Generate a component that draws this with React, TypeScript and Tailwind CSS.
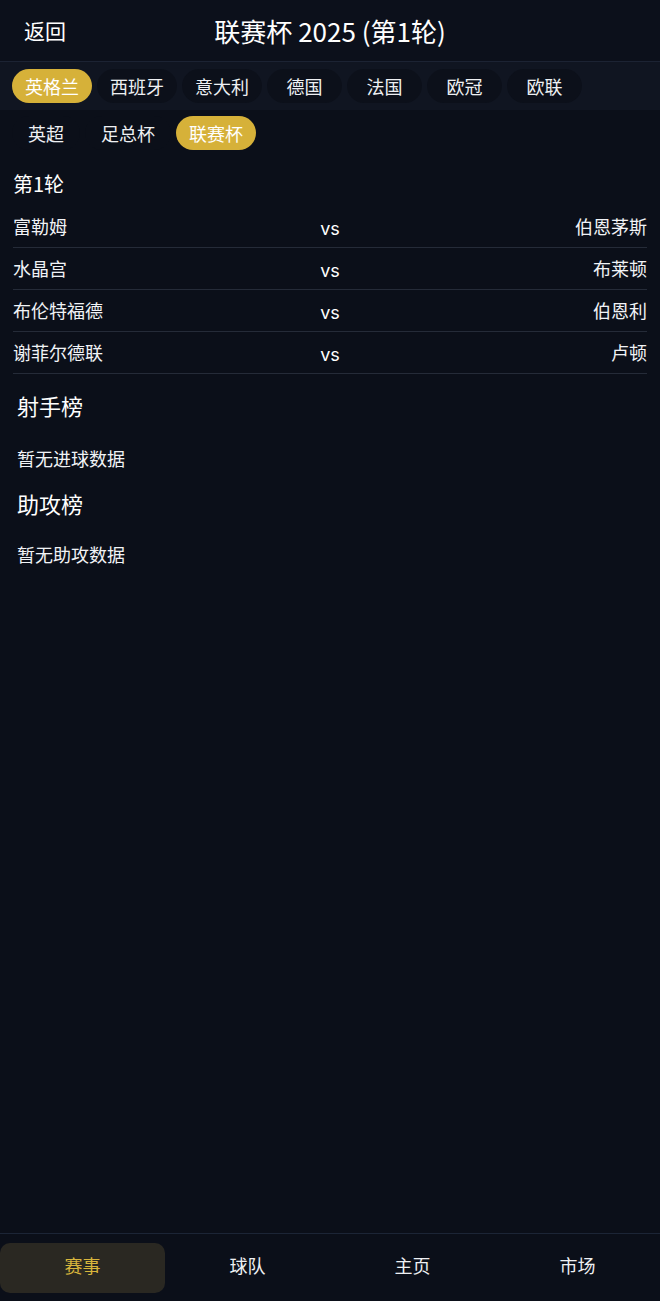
import { useState } from 'react'

const countries = ['英格兰', '西班牙', '意大利', '德国', '法国', '欧冠', '欧联']
const leagues = ['英超', '足总杯', '联赛杯']

const matches = [
  { home: '富勒姆', away: '伯恩茅斯' },
  { home: '水晶宫', away: '布莱顿' },
  { home: '布伦特福德', away: '伯恩利' },
  { home: '谢菲尔德联', away: '卢顿' },
]

const navItems = ['赛事', '球队', '主页', '市场']

export default function App() {
  const [country, setCountry] = useState('英格兰')
  const [league, setLeague] = useState('联赛杯')
  const [tab, setTab] = useState('赛事')

  return (
    <div
      className="min-h-[1301px] flex flex-col bg-[#0b0f19] text-[#f1f3f6]"
      style={{ fontFamily: '"Noto Sans CJK SC", "Noto Sans", sans-serif' }}
    >
      {/* Header */}
      <header className="h-[62px] flex items-center relative bg-[#0c101b] border-b border-[#1c2333]">
        <button className="pl-6 text-[21px] leading-none text-white">返回</button>
        <h1 className="absolute left-1/2 -translate-x-1/2 text-[26px] leading-none text-white whitespace-nowrap">
          联赛杯 2025 (第1轮)
        </h1>
      </header>

      {/* Country tabs */}
      <div className="h-[48px] flex items-center gap-[5px] px-3 bg-[#101521]">
        {countries.map((c) => (
          <button
            key={c}
            onClick={() => setCountry(c)}
            className={`h-[34px] px-3 rounded-full text-[18px] leading-none ${
              c === country ? 'bg-[#d6b139] text-white' : 'bg-[#0c101a] text-[#eef0f3]'
            } ${c.length === 2 ? 'min-w-[75px]' : 'min-w-[80px]'}`}
          >
            {c}
          </button>
        ))}
      </div>

      {/* League tabs */}
      <div className="h-[46px] flex items-center gap-[5px] px-3">
        {leagues.map((l) => (
          <button
            key={l}
            onClick={() => setLeague(l)}
            className={`h-[34px] rounded-full text-[18px] leading-none ${
              l === league ? 'px-[13px] bg-[#d6b139] text-white' : 'px-4 bg-[#0b0f19] text-[#eef0f3]'
            }`}
          >
            {l}
          </button>
        ))}
      </div>

      {/* Round */}
      <section className="px-[13px] pt-[14px]">
        <h2 className="text-[20px] leading-[28px] text-white">第1轮</h2>
        <div className="mt-[8px]">
          {matches.map((m) => (
            <div
              key={m.home}
              className="h-[42px] grid grid-cols-[1fr_auto_1fr] items-center border-b border-[#252b38] text-[18px]"
            >
              <span>{m.home}</span>
              <span
                className="pt-[3px] text-[18px] text-center text-white"
                style={{ fontFamily: 'Inter, sans-serif' }}
              >
                vs
              </span>
              <span className="text-right">{m.away}</span>
            </div>
          ))}
        </div>
      </section>

      {/* Stats */}
      <section className="px-[17px] pt-[16px]">
        <h3 className="text-[22px] leading-[30px] text-white">射手榜</h3>
        <p className="mt-[26px] text-[18px] leading-[24px]">暂无进球数据</p>
        <h3 className="mt-[18px] text-[22px] leading-[30px] text-white">助攻榜</h3>
        <p className="mt-[24px] text-[18px] leading-[24px]">暂无助攻数据</p>
      </section>

      <div className="flex-1" />

      {/* Bottom nav */}
      <nav className="h-[68px] border-t border-[#1c2536] bg-[#0b0f19] grid grid-cols-4 items-center">
        {navItems.map((n) => (
          <button
            key={n}
            onClick={() => setTab(n)}
            className={`h-[50px] rounded-[10px] text-[18px] leading-none pb-[5px] ${
              n === tab ? 'bg-[#2a2822] text-[#d8b53c]' : 'text-[#eef0f3]'
            }`}
          >
            {n}
          </button>
        ))}
      </nav>
    </div>
  )
}
